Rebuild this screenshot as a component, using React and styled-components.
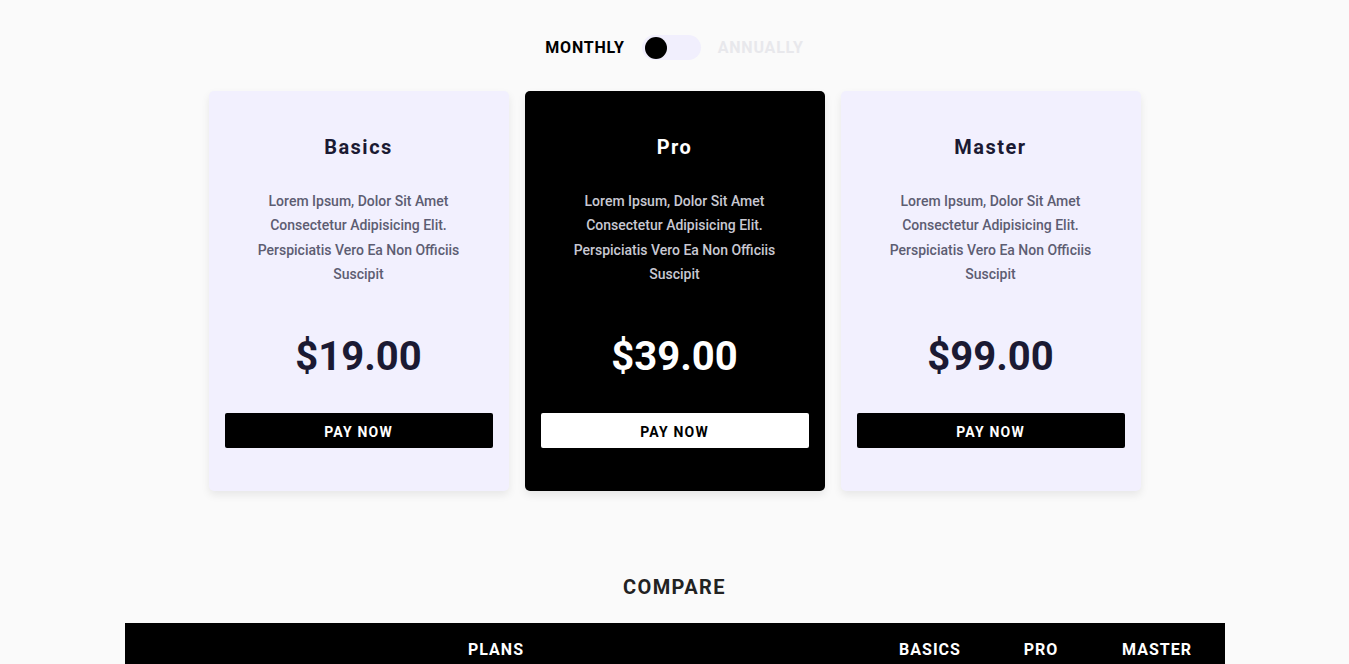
import styled, { createGlobalStyle } from 'styled-components';

const GlobalStyle = createGlobalStyle`
    body {
        margin: 0;
        background: #fafafa;
        font-family: Roboto, "Liberation Sans", sans-serif;
    }
`

const plans = [
    { name: 'Basics', price: '$19.00' },
    { name: 'Pro', price: '$39.00', dark: true },
    { name: 'Master', price: '$99.00' },
];

const desc = [
    'Lorem Ipsum, Dolor Sit Amet',
    'Consectetur Adipisicing Elit.',
    'Perspiciatis Vero Ea Non Officiis',
    'Suscipit',
];

const rows = [
    ['Storage', '10 GB', '50 GB', '1 TB'],
    ['Users', '1', '5', '10'],
    ['Support', 'Email', 'Chat', '24/7'],
];

const App = () => {
    return (
        <Page>
            <GlobalStyle />
            <Toggle>
                <ToggleLabel active>MONTHLY</ToggleLabel>
                <Switch>
                    <Knob />
                </Switch>
                <ToggleLabel>ANNUALLY</ToggleLabel>
            </Toggle>

            <Cards>
                {plans.map((p) => (
                    <Card key={p.name} dark={p.dark}>
                        <Title dark={p.dark}>{p.name}</Title>
                        <Desc dark={p.dark}>
                            {desc.map((d) => (
                                <div key={d}>{d}</div>
                            ))}
                        </Desc>
                        <Price dark={p.dark}>{p.price}</Price>
                        <PayButton dark={p.dark}>PAY NOW</PayButton>
                    </Card>
                ))}
            </Cards>

            <Heading>COMPARE</Heading>

            <Table>
                <HeadCell>PLANS</HeadCell>
                <HeadCell>BASICS</HeadCell>
                <HeadCell>PRO</HeadCell>
                <HeadCell>MASTER</HeadCell>
                {rows.map((r) =>
                    r.map((c, i) => (
                        <Cell key={r[0] + i}>{c}</Cell>
                    ))
                )}
            </Table>
        </Page>
    );
}

const Page = styled.div`
    display: flex;
    flex-direction: column;
    align-items: center;
    padding-top: 35px;
    padding-bottom: 60px;
`

const Toggle = styled.div`
    display: flex;
    align-items: center;
    gap: 17px;
`

const ToggleLabel = styled.span`
    font-size: 16px;
    font-weight: 700;
    letter-spacing: 0.8px;
    color: ${props => props.active ? '#000000' : '#e8e8ec'};
`

const Switch = styled.div`
    width: 59px;
    height: 25px;
    border-radius: 13px;
    background: #f1effd;
    display: flex;
    align-items: center;
    padding-left: 3px;
    box-sizing: border-box;
`

const Knob = styled.div`
    width: 22px;
    height: 22px;
    border-radius: 50%;
    background: #000000;
`

const Cards = styled.div`
    display: flex;
    gap: 16px;
    margin-top: 31px;
`

const Card = styled.div`
    width: 300px;
    height: 400px;
    box-sizing: border-box;
    padding: 44px 16px 0 16px;
    border-radius: 5px;
    background: ${props => props.dark ? '#000000' : '#f2f0fe'};
    box-shadow: 0 4px 8px rgba(0, 0, 0, 0.08);
    display: flex;
    flex-direction: column;
    align-items: center;
    text-align: center;
`

const Title = styled.h3`
    margin: 0;
    font-size: 20px;
    font-weight: 700;
    letter-spacing: 1.5px;
    line-height: 24px;
    color: ${props => props.dark ? '#ffffff' : '#1b1a33'};
`

const Desc = styled.div`
    margin-top: 30px;
    font-size: 14px;
    font-weight: 500;
    line-height: 24.4px;
    color: ${props => props.dark ? '#c8c8d2' : '#5d5d72'};
`

const Price = styled.div`
    margin-top: 46px;
    font-size: 40px;
    font-weight: 700;
    line-height: 48px;
    color: ${props => props.dark ? '#ffffff' : '#1b1a33'};
`

const PayButton = styled.button`
    margin-top: 32px;
    width: 100%;
    height: 35px;
    padding: 3px 0 0 0;
    border: none;
    border-radius: 2px;
    background: ${props => props.dark ? '#ffffff' : '#000000'};
    color: ${props => props.dark ? '#000000' : '#ffffff'};
    font-family: Roboto, "Liberation Sans", sans-serif;
    font-size: 14px;
    font-weight: 700;
    letter-spacing: 1.2px;
    cursor: pointer;
`

const Heading = styled.h2`
    margin: 84px 0 0 0;
    font-size: 20px;
    font-weight: 700;
    line-height: 24px;
    letter-spacing: 1.4px;
    color: #222222;
`

const Table = styled.div`
    margin-top: 24px;
    width: 1100px;
    display: grid;
    grid-template-columns: 743px 125px 97px 135px;
    background: #ffffff;
`

const HeadCell = styled.div`
    background: #000000;
    color: #ffffff;
    font-size: 16px;
    font-weight: 700;
    letter-spacing: 1px;
    text-align: center;
    padding: 17px 0;
`

const Cell = styled.div`
    font-size: 14px;
    color: #333333;
    text-align: center;
    padding: 14px 0;
    border-bottom: 1px solid #eeeeee;
`

export default App;
